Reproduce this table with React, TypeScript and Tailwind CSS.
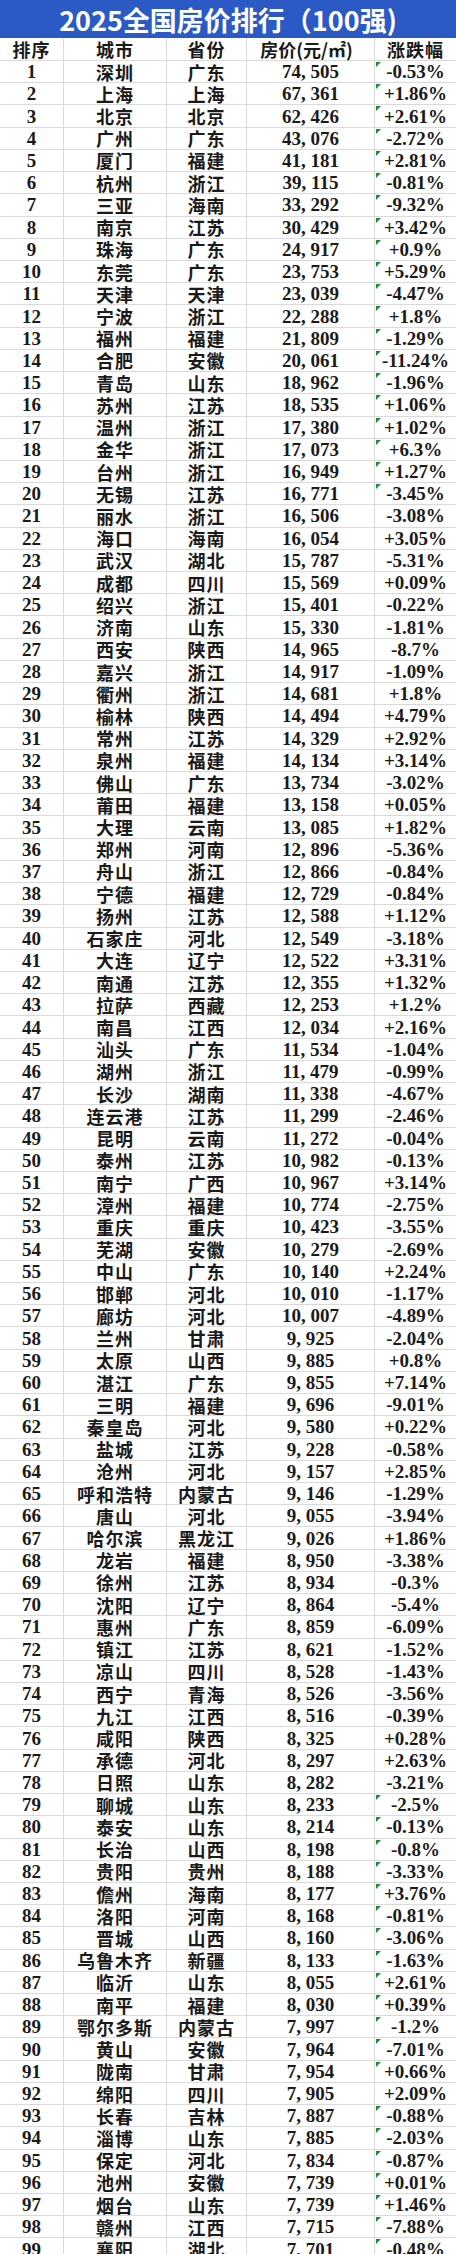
type Row = [number, string, string, string, string];

const rows: Row[] = [
  [1, "深圳", "广东", "74,505", "-0.53%"],
  [2, "上海", "上海", "67,361", "+1.86%"],
  [3, "北京", "北京", "62,426", "+2.61%"],
  [4, "广州", "广东", "43,076", "-2.72%"],
  [5, "厦门", "福建", "41,181", "+2.81%"],
  [6, "杭州", "浙江", "39,115", "-0.81%"],
  [7, "三亚", "海南", "33,292", "-9.32%"],
  [8, "南京", "江苏", "30,429", "+3.42%"],
  [9, "珠海", "广东", "24,917", "+0.9%"],
  [10, "东莞", "广东", "23,753", "+5.29%"],
  [11, "天津", "天津", "23,039", "-4.47%"],
  [12, "宁波", "浙江", "22,288", "+1.8%"],
  [13, "福州", "福建", "21,809", "-1.29%"],
  [14, "合肥", "安徽", "20,061", "-11.24%"],
  [15, "青岛", "山东", "18,962", "-1.96%"],
  [16, "苏州", "江苏", "18,535", "+1.06%"],
  [17, "温州", "浙江", "17,380", "+1.02%"],
  [18, "金华", "浙江", "17,073", "+6.3%"],
  [19, "台州", "浙江", "16,949", "+1.27%"],
  [20, "无锡", "江苏", "16,771", "-3.45%"],
  [21, "丽水", "浙江", "16,506", "-3.08%"],
  [22, "海口", "海南", "16,054", "+3.05%"],
  [23, "武汉", "湖北", "15,787", "-5.31%"],
  [24, "成都", "四川", "15,569", "+0.09%"],
  [25, "绍兴", "浙江", "15,401", "-0.22%"],
  [26, "济南", "山东", "15,330", "-1.81%"],
  [27, "西安", "陕西", "14,965", "-8.7%"],
  [28, "嘉兴", "浙江", "14,917", "-1.09%"],
  [29, "衢州", "浙江", "14,681", "+1.8%"],
  [30, "榆林", "陕西", "14,494", "+4.79%"],
  [31, "常州", "江苏", "14,329", "+2.92%"],
  [32, "泉州", "福建", "14,134", "+3.14%"],
  [33, "佛山", "广东", "13,734", "-3.02%"],
  [34, "莆田", "福建", "13,158", "+0.05%"],
  [35, "大理", "云南", "13,085", "+1.82%"],
  [36, "郑州", "河南", "12,896", "-5.36%"],
  [37, "舟山", "浙江", "12,866", "-0.84%"],
  [38, "宁德", "福建", "12,729", "-0.84%"],
  [39, "扬州", "江苏", "12,588", "+1.12%"],
  [40, "石家庄", "河北", "12,549", "-3.18%"],
  [41, "大连", "辽宁", "12,522", "+3.31%"],
  [42, "南通", "江苏", "12,355", "+1.32%"],
  [43, "拉萨", "西藏", "12,253", "+1.2%"],
  [44, "南昌", "江西", "12,034", "+2.16%"],
  [45, "汕头", "广东", "11,534", "-1.04%"],
  [46, "湖州", "浙江", "11,479", "-0.99%"],
  [47, "长沙", "湖南", "11,338", "-4.67%"],
  [48, "连云港", "江苏", "11,299", "-2.46%"],
  [49, "昆明", "云南", "11,272", "-0.04%"],
  [50, "泰州", "江苏", "10,982", "-0.13%"],
  [51, "南宁", "广西", "10,967", "+3.14%"],
  [52, "漳州", "福建", "10,774", "-2.75%"],
  [53, "重庆", "重庆", "10,423", "-3.55%"],
  [54, "芜湖", "安徽", "10,279", "-2.69%"],
  [55, "中山", "广东", "10,140", "+2.24%"],
  [56, "邯郸", "河北", "10,010", "-1.17%"],
  [57, "廊坊", "河北", "10,007", "-4.89%"],
  [58, "兰州", "甘肃", "9,925", "-2.04%"],
  [59, "太原", "山西", "9,885", "+0.8%"],
  [60, "湛江", "广东", "9,855", "+7.14%"],
  [61, "三明", "福建", "9,696", "-9.01%"],
  [62, "秦皇岛", "河北", "9,580", "+0.22%"],
  [63, "盐城", "江苏", "9,228", "-0.58%"],
  [64, "沧州", "河北", "9,157", "+2.85%"],
  [65, "呼和浩特", "内蒙古", "9,146", "-1.29%"],
  [66, "唐山", "河北", "9,055", "-3.94%"],
  [67, "哈尔滨", "黑龙江", "9,026", "+1.86%"],
  [68, "龙岩", "福建", "8,950", "-3.38%"],
  [69, "徐州", "江苏", "8,934", "-0.3%"],
  [70, "沈阳", "辽宁", "8,864", "-5.4%"],
  [71, "惠州", "广东", "8,859", "-6.09%"],
  [72, "镇江", "江苏", "8,621", "-1.52%"],
  [73, "凉山", "四川", "8,528", "-1.43%"],
  [74, "西宁", "青海", "8,526", "-3.56%"],
  [75, "九江", "江西", "8,516", "-0.39%"],
  [76, "咸阳", "陕西", "8,325", "+0.28%"],
  [77, "承德", "河北", "8,297", "+2.63%"],
  [78, "日照", "山东", "8,282", "-3.21%"],
  [79, "聊城", "山东", "8,233", "-2.5%"],
  [80, "泰安", "山东", "8,214", "-0.13%"],
  [81, "长治", "山西", "8,198", "-0.8%"],
  [82, "贵阳", "贵州", "8,188", "-3.33%"],
  [83, "儋州", "海南", "8,177", "+3.76%"],
  [84, "洛阳", "河南", "8,168", "-0.81%"],
  [85, "晋城", "山西", "8,160", "-3.06%"],
  [86, "乌鲁木齐", "新疆", "8,133", "-1.63%"],
  [87, "临沂", "山东", "8,055", "+2.61%"],
  [88, "南平", "福建", "8,030", "+0.39%"],
  [89, "鄂尔多斯", "内蒙古", "7,997", "-1.2%"],
  [90, "黄山", "安徽", "7,964", "-7.01%"],
  [91, "陇南", "甘肃", "7,954", "+0.66%"],
  [92, "绵阳", "四川", "7,905", "+2.09%"],
  [93, "长春", "吉林", "7,887", "-0.88%"],
  [94, "淄博", "山东", "7,885", "-2.03%"],
  [95, "保定", "河北", "7,834", "-0.87%"],
  [96, "池州", "安徽", "7,739", "+0.01%"],
  [97, "烟台", "山东", "7,739", "+1.46%"],
  [98, "赣州", "江西", "7,715", "-7.88%"],
  [99, "襄阳", "湖北", "7,701", "-0.48%"],
];

// rows where excel shows the little green "number as text" marker
const flagged = (n: number) => (n >= 1 && n <= 20) || (n >= 79 && n <= 99 && n !== 92);

const cjk = "font-['Noto_Sans_CJK_SC',sans-serif] font-semibold text-[18px] tracking-[1px]";
const num = "font-['Liberation_Serif','Noto_Sans_CJK_SC',serif] font-bold text-[19px]";
const grid = "grid grid-cols-[64px_103px_80px_128px_1fr]";
const cell = "flex items-center justify-center border-r border-[#dadada] leading-none";

function Price({ value }: { value: string }) {
  const [a, b] = value.split(",");
  return (
    <>
      {a}
      <span className="inline-block w-[0.5em]">,</span>
      {b}
    </>
  );
}

export default function App() {
  return (
    <div className="w-[456px] bg-white text-[#1a1a1a]">
      <div className="flex h-[38px] items-center justify-center bg-[#2b5ac4]">
        <h1 className="font-['Noto_Sans_CJK_SC',sans-serif] text-[27px] font-bold leading-none text-white">
          2025全国房价排行（100强)
        </h1>
      </div>

      <div className={`${grid} h-[23px] border-b border-[#dadada]`}>
        <div className={`${cell} ${cjk}`}>排序</div>
        <div className={`${cell} ${cjk}`}>城市</div>
        <div className={`${cell} ${cjk}`}>省份</div>
        <div className={`${cell} ${cjk} pr-2 tracking-normal`}>房价(元/㎡)</div>
        <div className={`${cell} ${cjk} border-r-0`}>涨跌幅</div>
      </div>

      {rows.map(([rank, city, prov, price, change]) => (
        <div key={rank} className={`${grid} h-[22.23px] border-b border-[#dadada]`}>
          <div className={`${cell} ${num}`}>{rank}</div>
          <div className={`${cell} ${cjk}`}>{city}</div>
          <div className={`${cell} ${cjk}`}>{prov}</div>
          <div className={`${cell} ${num}`}>
            <Price value={price} />
          </div>
          <div className={`${cell} ${num} relative border-r-0`}>
            {flagged(rank) && (
              <span className="absolute left-[1px] top-[1px] h-0 w-0 border-r-[5px] border-t-[5px] border-r-transparent border-t-[#1f8a3a]" />
            )}
            {change}
          </div>
        </div>
      ))}
    </div>
  );
}
